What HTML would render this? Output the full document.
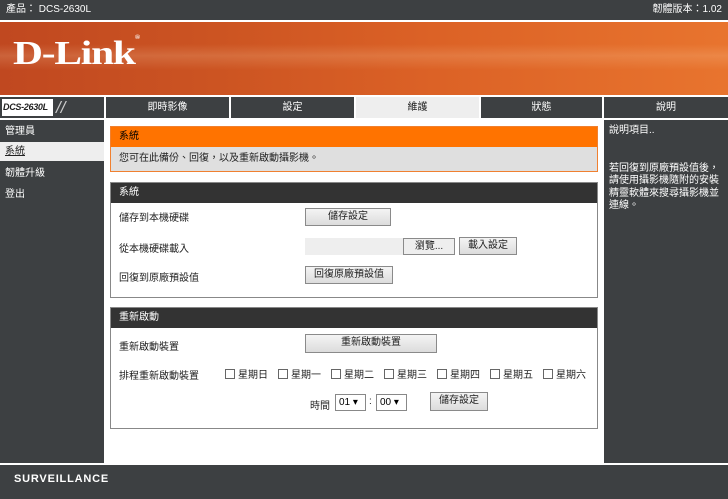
<!DOCTYPE html>
<html><head><meta charset="utf-8">
<style>
*{margin:0;padding:0;box-sizing:border-box}
body{width:728px;height:499px;position:relative;background:#fff;font-family:"Liberation Sans","Noto Sans CJK TC",sans-serif;font-size:10px;color:#000;overflow:hidden}
.a{position:absolute}
.dark{background:#3d4042;color:#fff}
.tab{position:absolute;top:97px;height:21px;line-height:21px;text-align:center;color:#fff;background:#3d4042;font-size:10px}
.side{position:absolute;left:0;width:104px;height:19px;line-height:19px;padding-left:5px;color:#fff;background:#3d4042;font-size:10px}
.btn{position:absolute;height:18px;line-height:16px;text-align:center;background:linear-gradient(#f4f4f4,#dcdcdc);border:1px solid #8a8a8a;font-size:10px;color:#222}
.lbl{position:absolute;font-size:10px;color:#222;white-space:nowrap}
.cb{display:inline-block;width:10px;height:10px;border:1px solid #666;background:#fff;vertical-align:-1px;margin-right:3px}
.sel{position:absolute;height:17px;border:1px solid #888;background:#fff;font-size:10px;line-height:15px;padding-left:3px}
</style></head><body>
<div class="a dark" style="left:0;top:0;width:728px;height:20px;line-height:20px;padding-left:6px;font-size:10px">產品： DCS-2630L<span style="position:absolute;right:6px">韌體版本：1.02</span></div>
<div class="a" style="left:0;top:22px;width:728px;height:73px;background:linear-gradient(90deg,#c04820 0%,#cc5422 30%,#dc6226 60%,#e8742e 100%)">
<div class="a" style="left:0;top:22px;width:728px;height:26px;background:linear-gradient(180deg,rgba(255,255,255,0) 0%,rgba(255,220,180,.18) 45%,rgba(255,255,255,0) 100%)"></div>
<div class="a" style="left:13px;top:13px;font-family:'Liberation Serif',serif;font-weight:bold;font-size:34px;color:#fff;letter-spacing:-1px;transform:scaleX(1.22);transform-origin:left;white-space:nowrap">D-Link<span style="font-size:6px;vertical-align:top">®</span></div>
</div>
<div class="a" style="left:0;top:97px;width:104px;height:21px;background:#3d4042"></div>
<div class="a" style="left:2px;top:99px;width:51px;height:17px;background:#fff;font-style:italic;font-weight:bold;font-size:9px;line-height:17px;padding-left:1px;color:#222;white-space:nowrap;letter-spacing:-0.3px">DCS-2630L</div>
<div class="a" style="left:56px;top:98px;color:#ccc;font-size:17px;font-style:italic;line-height:19px">//</div>
<div class="tab" style="left:106px;width:123px">即時影像</div>
<div class="tab" style="left:231px;width:123px">設定</div>
<div class="tab" style="left:356px;width:123px;background:#eee;color:#222">維護</div>
<div class="tab" style="left:481px;width:121px">狀態</div>
<div class="tab" style="left:604px;width:124px">說明</div>

<div class="a" style="left:0;top:120px;width:104px;height:343px;background:#3d4042"></div>
<div class="side" style="top:122px">管理員</div>
<div class="side" style="top:142px;background:#eee;color:#222;text-decoration:underline">系統</div>
<div class="side" style="top:164px">韌體升級</div>
<div class="side" style="top:185px">登出</div>

<div class="a" style="left:604px;top:120px;width:124px;height:343px;background:#3d4042;color:#fff;padding:5px 4px 5px 5px;font-size:10px;line-height:12.5px">說明項目..<br><br><br>若回復到原廠預設值後，請使用攝影機隨附的安裝精靈軟體來搜尋攝影機並連線。</div>

<div class="a" style="left:110px;top:126px;width:488px;height:46px;border:1px solid #f08030;background:#dfdfdf">
<div style="height:20px;background:#ff7300;color:#000;line-height:20px;padding-left:8px">系統</div>
<div style="padding-left:8px;line-height:24px;color:#222">您可在此備份、回復，以及重新啟動攝影機。</div>
</div>

<div class="a" style="left:110px;top:182px;width:488px;height:116px;border:1px solid #888">
<div style="height:20px;background:#333;color:#fff;line-height:20px;padding-left:8px">系統</div>
</div>
<div class="lbl" style="left:119px;top:209px">儲存到本機硬碟</div>
<div class="btn" style="left:305px;top:208px;width:86px">儲存設定</div>
<div class="lbl" style="left:119px;top:240px">從本機硬碟載入</div>
<div class="a" style="left:305px;top:238px;width:98px;height:17px;background:#eee"></div>
<div class="btn" style="left:403px;top:238px;width:52px;height:17px;background:#eee">瀏覽...</div>
<div class="btn" style="left:459px;top:237px;width:58px">載入設定</div>
<div class="lbl" style="left:119px;top:269px">回復到原廠預設值</div>
<div class="btn" style="left:305px;top:266px;width:88px">回復原廠預設值</div>

<div class="a" style="left:110px;top:307px;width:488px;height:122px;border:1px solid #888">
<div style="height:20px;background:#333;color:#fff;line-height:20px;padding-left:8px">重新啟動</div>
</div>
<div class="lbl" style="left:119px;top:338px">重新啟動裝置</div>
<div class="btn" style="left:305px;top:334px;width:132px;height:19px">重新啟動裝置</div>
<div class="lbl" style="left:119px;top:367px">排程重新啟動裝置</div>
<div class="lbl" style="left:225px;top:366px"><span class="cb"></span>星期日</div>
<div class="lbl" style="left:278px;top:366px"><span class="cb"></span>星期一</div>
<div class="lbl" style="left:331px;top:366px"><span class="cb"></span>星期二</div>
<div class="lbl" style="left:384px;top:366px"><span class="cb"></span>星期三</div>
<div class="lbl" style="left:437px;top:366px"><span class="cb"></span>星期四</div>
<div class="lbl" style="left:490px;top:366px"><span class="cb"></span>星期五</div>
<div class="lbl" style="left:543px;top:366px"><span class="cb"></span>星期六</div>
<div class="lbl" style="left:310px;top:397px">時間</div>
<div class="sel" style="left:335px;top:394px;width:31px">01 ▾</div>
<div class="lbl" style="left:369px;top:396px">:</div>
<div class="sel" style="left:376px;top:394px;width:31px">00 ▾</div>
<div class="btn" style="left:430px;top:392px;width:58px;height:19px">儲存設定</div>

<div class="a dark" style="left:0;top:465px;width:728px;height:34px;line-height:28px;padding-left:14px;font-weight:bold;font-size:11px;letter-spacing:0.8px">SURVEILLANCE</div>
</body></html>
